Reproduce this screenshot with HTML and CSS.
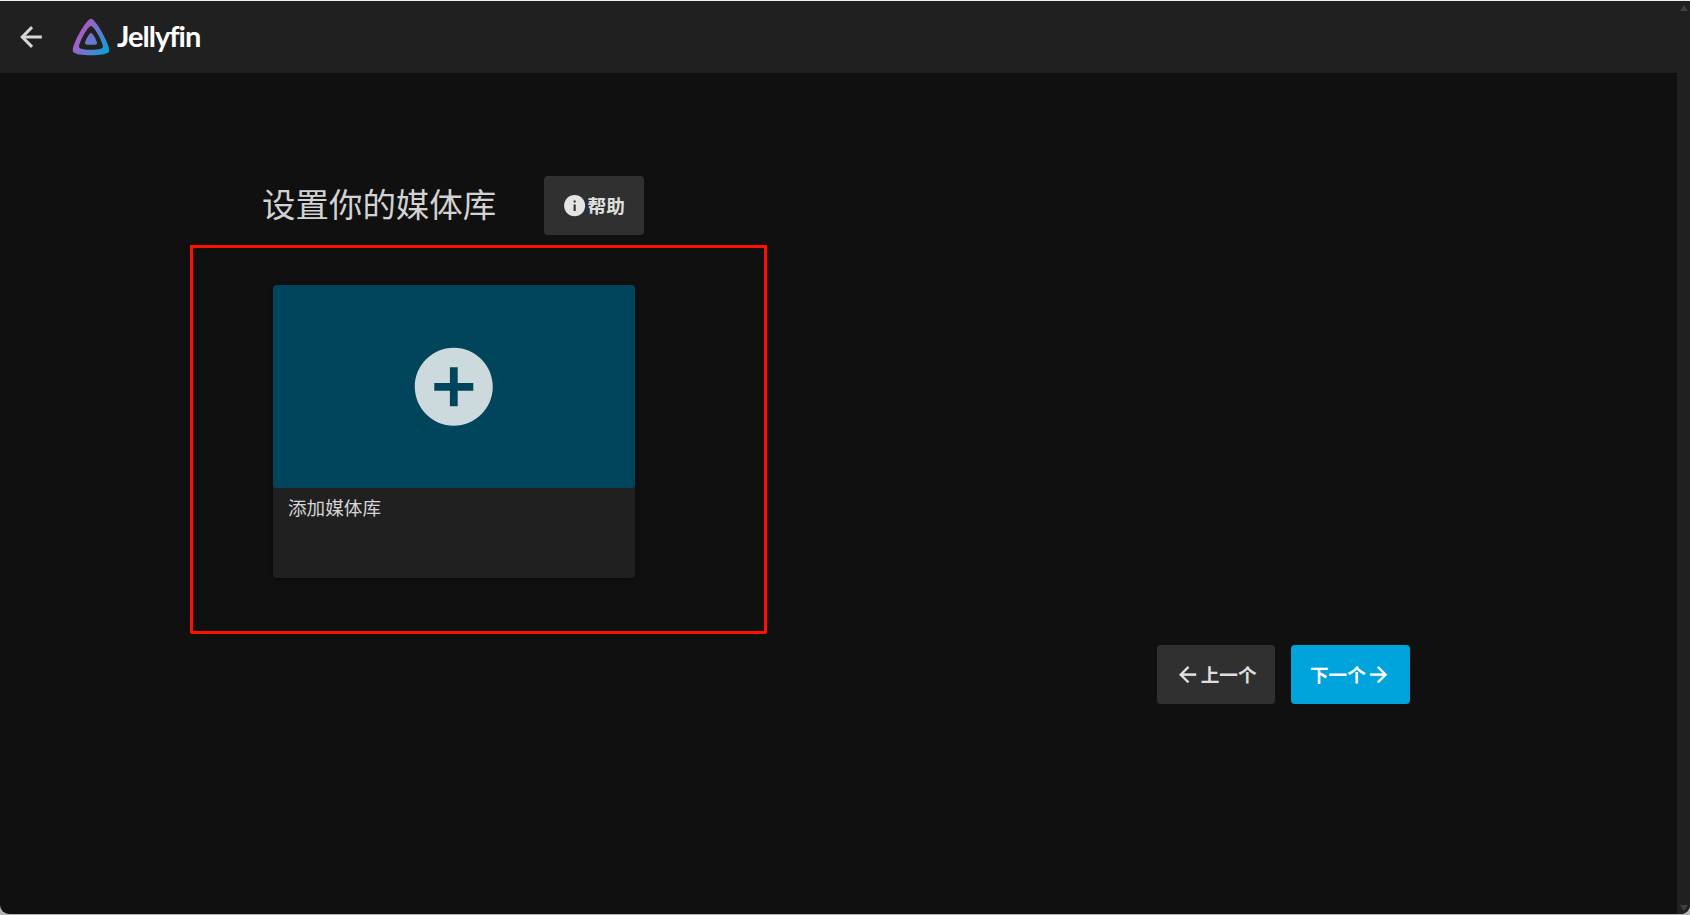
FILE: index.html
```html
<!DOCTYPE html>
<html lang="zh-CN">
<head>
<meta charset="utf-8">
<title>Jellyfin</title>
<link rel="stylesheet" href="styles.css">
</head>
<body>
	<div class="window">
		<div class="page">
			<header class="header">
				<a class="back" href="javascript:;">
					<svg viewBox="0 0 24 24"><path d="M20 11H7.83l5.59-5.59L12 4l-8 8 8 8 1.41-1.41L7.83 13H20v-2z"/></svg>
				</a>
				<svg class="logo" viewBox="0 0 512 512">
					<defs>
						<linearGradient id="grad" gradientUnits="userSpaceOnUse" x1="110.25" y1="213.3" x2="496.14" y2="436.09">
							<stop offset="0" stop-color="#aa5cc3"/>
							<stop offset="1" stop-color="#00a4dc"/>
						</linearGradient>
					</defs>
					<path fill="url(#grad)" d="M256,201.62c-20.44,0-86.23,119.29-76.2,139.43s142.48,19.92,152.4,0S276.47,201.63,256,201.62Z"/>
					<path fill="url(#grad)" d="M256,23.3C194.44,23.3-3.82,382.73,26.41,443.43s429.34,60,459.24,0S317.62,23.3,256,23.3ZM406.51,390.76c-19.59,39.33-281.08,39.77-300.9,0S215.71,115.48,256.06,115.48,426.1,351.42,406.51,390.76Z"/>
				</svg>
				<span class="brand">Jellyfin</span>
			</header>

			<main class="wizard">
				<div class="title-row">
					<h1>设置你的媒体库</h1>
					<button class="btn help">
						<svg viewBox="0 0 24 24"><path d="M12 2C6.48 2 2 6.48 2 12s4.48 10 10 10 10-4.48 10-10S17.52 2 12 2zm1 15h-2v-6h2v6zm0-8h-2V7h2v2z"/></svg>
						<span>帮助</span>
					</button>
				</div>

				<div class="card">
					<div class="card-image">
						<svg viewBox="0 0 24 24"><path d="M12 2C6.48 2 2 6.48 2 12s4.48 10 10 10 10-4.48 10-10S17.52 2 12 2zm5 11h-4v4h-2v-4H7v-2h4V7h2v4h4v2z"/></svg>
					</div>
					<div class="card-text">添加媒体库</div>
				</div>

				<div class="nav">
					<button class="btn prev">
						<svg viewBox="0 0 24 24"><path d="M20 11H7.83l5.59-5.59L12 4l-8 8 8 8 1.41-1.41L7.83 13H20v-2z"/></svg>
						<span>上一个</span>
					</button>
					<button class="btn next">
						<span>下一个</span>
						<svg viewBox="0 0 24 24"><path d="M12 4l-1.41 1.41L16.17 11H4v2h12.17l-5.58 5.59L12 20l8-8z"/></svg>
					</button>
				</div>
			</main>
		</div>

		<div class="scrollbar">
			<i class="up"></i>
			<i class="down"></i>
		</div>
		<div class="mark"></div>
	</div>
</body>
</html>
```

FILE: styles.css
```css
*{
	box-sizing:border-box;
}

body{
	margin:0;
	height:915px;
	padding:1px 0;
	overflow:hidden;
	background:linear-gradient(#e4f0f5 50%,#b4b4b4 50%);
	font-family:"Noto Sans","Noto Sans CJK SC",sans-serif;
	font-size:18.6px;
	color:rgba(255,255,255,.82);
}

.window{
	position:relative;
	display:flex;
	height:913px;
	background:#101010;
	border-radius:0 0 9px 9px;
	overflow:hidden;
}

.page{
	flex:1;
}

.header{
	display:flex;
	align-items:center;
	height:72px;
	padding-left:15px;
	background:#202020;
}

.back{
	display:flex;
	padding-bottom:1px;
}

.back svg{
	width:32px;
	height:32px;
	fill:#d9d9d9;
	stroke:#d9d9d9;
	stroke-width:.3;
}

.logo{
	width:40px;
	height:40px;
	margin-left:24px;
}

.brand{
	margin-left:6px;
	padding-bottom:2px;
	font-family:Lato,sans-serif;
	font-size:29px;
	font-weight:bold;
	line-height:40px;
	letter-spacing:-1px;
	color:#fff;
}

.wizard{
	width:1148px;
	margin-left:262px;
	padding-top:103px;
}

.title-row{
	display:flex;
	align-items:center;
	height:59px;
}

h1{
	width:282px;
	margin:0;
	padding-bottom:5px;
	font-family:"Noto Sans CJK SC",sans-serif;
	font-size:33.48px;
	font-weight:400;
	line-height:48px;
}

.btn{
	display:flex;
	align-items:center;
	justify-content:center;
	height:59px;
	padding:0;
	border:0;
	border-radius:4px;
	background:#303030;
	color:rgba(255,255,255,.87);
	font-family:"Noto Sans CJK SC",sans-serif;
	font-size:18.6px;
	font-weight:bold;
}

.btn span{
	padding-bottom:2px;
}

.btn svg{
	width:25.3px;
	height:25.3px;
	fill:currentColor;
}

.prev svg,
.next svg{
	stroke:currentColor;
	stroke-width:.3;
}

.help{
	width:100px;
	padding-right:1px;
}

.card{
	width:362px;
	height:293px;
	margin:50px 0 0 11px;
	border-radius:4px;
	background:#202020;
	box-shadow:0 1px 4px rgba(0,0,0,.37);
}

.card-image{
	display:flex;
	align-items:center;
	justify-content:center;
	height:203px;
	padding-right:1px;
	border-radius:4px;
	background:#00455c;
}

.card-image svg{
	width:93.6px;
	height:93.6px;
	fill:#ccdade;
}

.card-text{
	padding:5px 15px;
	font-family:"Noto Sans CJK SC",sans-serif;
	line-height:28px;
}

.nav{
	display:flex;
	justify-content:flex-end;
	gap:16px;
	margin-top:67px;
}

.prev{
	width:118px;
}

.next{
	width:119px;
	background:#00a4dc;
	color:#fff;
}

.scrollbar{
	display:flex;
	flex-direction:column;
	justify-content:space-between;
	align-items:center;
	width:13px;
	padding:4px 0 3px;
	background:#202020;
}

.up,
.down{
	border:4px solid transparent;
}

.up{
	border-top:0;
	border-bottom:6px solid #404040;
}

.down{
	border-bottom:0;
	border-top:6px solid #404040;
}

/* red frame round the add-library area */
.mark{
	position:absolute;
	left:190px;
	top:244px;
	width:577px;
	height:389px;
	border:3px solid #ff1000;
	border-radius:0 0 2px 2px;
}
```
